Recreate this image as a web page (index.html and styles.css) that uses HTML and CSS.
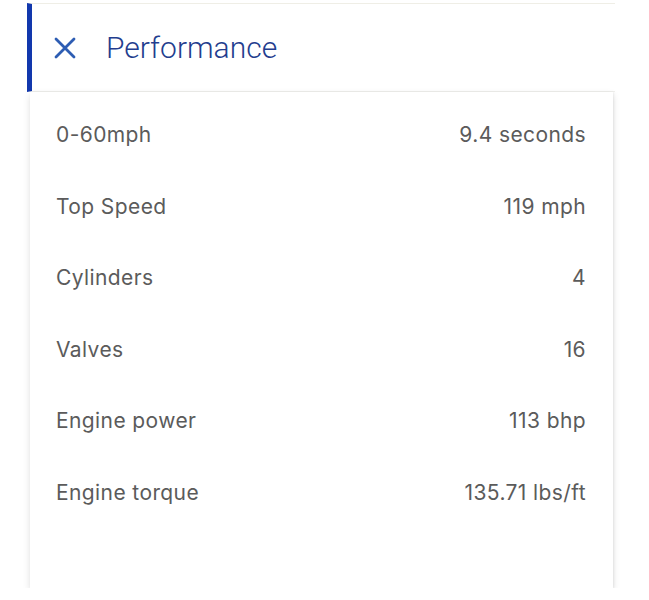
FILE: index.html
```html
<!DOCTYPE html>
<html lang="en">
<head>
    <meta charset="UTF-8">
    <meta name="viewport" content="width=device-width, initial-scale=1.0">
    <title>Performance</title>
    <link rel="stylesheet" href="styles.css">
</head>
<body>

<!-- Section header -->
<div class="section-head">
    <svg class="close-icon" width="24" height="22" viewBox="0 0 24 22">
        <path d="M3 2 L21 20 M21 2 L3 20" stroke="#2d5db3" stroke-width="2.8" stroke-linecap="round" fill="none"/>
    </svg>
    <span class="section-title">Performance</span>
</div>

<!-- Spec card -->
<div class="card">
    <div class="row"><span>0-60mph</span><span>9.4 seconds</span></div>
    <div class="row"><span>Top Speed</span><span>119 mph</span></div>
    <div class="row"><span>Cylinders</span><span>4</span></div>
    <div class="row"><span>Valves</span><span>16</span></div>
    <div class="row"><span>Engine power</span><span>113 bhp</span></div>
    <div class="row"><span>Engine torque</span><span>135.71 lbs/ft</span></div>
</div>

</body>
</html>
```

FILE: styles.css
```css
body {
    margin: 0;
    padding: 3px 0 0 27px;
    background-color: #fff;
    font-family: 'Inter', sans-serif;
}

/* Header with blue marker */
.section-head {
    width: 588px;
    height: 89px;
    border-left: 5px solid #1238ad;
    border-top: 1px solid #efeee6;
    border-bottom: 1px solid #f1f1ee;
    display: flex;
    align-items: center;
    box-sizing: border-box;
}

.close-icon {
    margin-left: 21px;
}

.section-title {
    font-family: 'Roboto', sans-serif;
    font-size: 30px;
    font-weight: 300;
    color: #233d8e;
    margin-left: 29px;
}

/* Card */
.card {
    width: 583px;
    height: 496px;
    margin-left: 3px;
    padding: 22px 27px 0 26px;
    box-sizing: border-box;
    background-color: #fff;
    box-shadow: 0 3px 7px rgba(0, 0, 0, 0.13), 1px 0 2px rgba(0, 0, 0, 0.06);
}

.row {
    display: flex;
    justify-content: space-between;
    height: 71.5px;
    line-height: 42px;
    font-size: 21px;
    letter-spacing: 0.4px;
    color: #5b5b5b;
}
```
